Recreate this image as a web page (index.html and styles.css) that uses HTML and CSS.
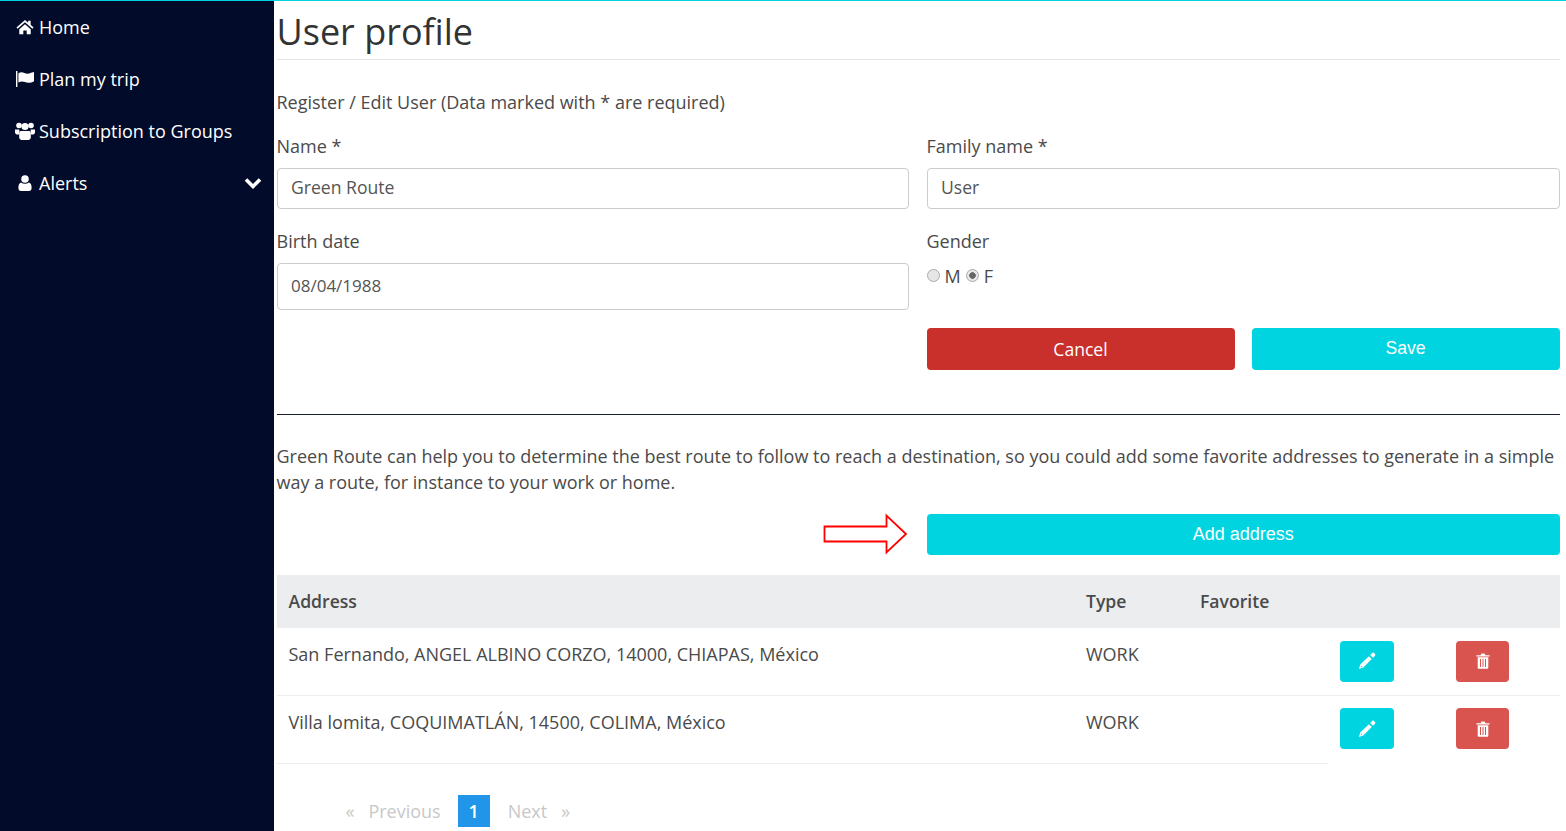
FILE: index.html
```html
<!DOCTYPE html>
<html lang="en">
<head>
    <meta charset="UTF-8">
    <title>User profile</title>
    <link rel="stylesheet" href="styles.css">
</head>
<body>
    <div class="layout">
        <nav class="sidebar">
            <a class="nav-item" href="#">
                <svg class="nav-icon" viewBox="0 0 16 14"><path d="M8 .8.4 7.4l1 1.1L8 2.8l6.6 5.7 1-1.1L13 5.1V1.4h-2.2v1.8z"/><path d="M2.9 8.9 8 4.5l5.1 4.4v4.600H9.500V10h-3v3.500H2.900z"/></svg>
                <span>Home</span>
            </a>
            <a class="nav-item" href="#">
                <svg class="nav-icon nav-icon-flag" viewBox="0 0 18 16"><path d="M0 0h1.400v16H0z"/><path d="M2.400 2.200c2.200-1.300 4.100-1.100 6-.2s4.300 1 6.600-.3L18 1v9.300c-3 1.800-6.500 1.900-9.100.8-2.200-.9-4.300-.9-6.500.5z"/></svg>
                <span>Plan my trip</span>
            </a>
            <a class="nav-item" href="#">
                <svg class="nav-icon nav-icon-wide" viewBox="0 0 20 18"><circle cx="4" cy="3.500" r="2.800"/><circle cx="16" cy="3.500" r="2.800"/><path d="M0 7.500h4.200l.8 5H1.500L0 11zM20 7.500h-4.200l-.8 5h3.500l1.500-1.500z"/><circle cx="10" cy="4.500" r="3.600"/><path d="M5.200 9h9.600l1 4.500v2.800L14 18H6l-1.800-1.700v-2.800z"/></svg>
                <span>Subscription to Groups</span>
            </a>
            <a class="nav-item" href="#">
                <svg class="nav-icon" viewBox="0 0 16 16"><circle cx="8" cy="4" r="3.800"/><path d="M4 7.600c2.400 1.600 5.600 1.600 8 0 1.800.5 2.600 2.400 2.600 5.400 0 1.900-1 3-2.600 3H4c-1.600 0-2.600-1.100-2.600-3 0-3 .8-4.900 2.600-5.400z"/></svg>
                <span>Alerts</span>
                <svg class="nav-chevron" viewBox="0 0 18 12"><path d="M2 2.500l7 7 7-7" fill="none" stroke="#fff" stroke-width="3.600"/></svg>
            </a>
        </nav>

        <main class="content">
            <h1 class="page-title">User profile</h1>
            <p class="intro">Register / Edit User (Data marked with * are required)</p>

            <form class="profile-form">
                <div class="field">
                    <label class="field-label">Name *</label>
                    <input class="text-input" type="text" value="Green Route">
                </div>
                <div class="field">
                    <label class="field-label">Family name *</label>
                    <input class="text-input" type="text" value="User">
                </div>
                <div class="field field-date">
                    <label class="field-label">Birth date</label>
                    <input class="text-input date-input" type="text" value="08/04/1988">
                </div>
                <div class="field field-date">
                    <label class="field-label">Gender</label>
                    <div class="radio-row">
                        <span class="radio"></span><span>M</span>
                        <span class="radio radio-on"></span><span>F</span>
                    </div>
                </div>
                <div></div>
                <div class="button-pair">
                    <button class="btn btn-red" type="button">Cancel</button>
                    <button class="btn btn-cyan btn-save" type="button">Save</button>
                </div>
            </form>

            <hr class="divider">

            <p class="help-text">Green Route can help you to determine the best route to follow to reach a destination, so you could add some favorite addresses to generate in a simple way a route, for instance to your work or home.</p>

            <div class="add-row">
                <svg class="arrow" viewBox="0 0 86 42"><path d="M1.500 13.500h62v-11L83 21 63.500 39.500v-11h-62z" fill="#fff" stroke="#f00" stroke-width="1.800"/></svg>
                <button class="btn btn-cyan btn-add" type="button">Add address</button>
            </div>

            <table class="address-table">
                <colgroup>
                    <col class="col-address">
                    <col class="col-type">
                    <col class="col-favorite">
                    <col class="col-edit">
                    <col class="col-delete">
                </colgroup>
                <thead>
                    <tr>
                        <th>Address</th>
                        <th>Type</th>
                        <th>Favorite</th>
                        <th></th>
                        <th></th>
                    </tr>
                </thead>
                <tbody>
                    <tr>
                        <td>San Fernando, ANGEL ALBINO CORZO, 14000, CHIAPAS, México</td>
                        <td>WORK</td>
                        <td></td>
                        <td><button class="icon-btn icon-btn-edit" type="button"><svg class="btn-icon btn-icon-pencil" viewBox="0 0 16 16"><path fill-rule="evenodd" d="M9.700 3.800l2.500 2.500-7.500 7.500-3.900 1.200 1.200-3.900zM3 12.100l-.7 1.600 1.600-.7zM10.800 2.700l1.800-1.800c.5-.5 1.100-.5 1.600 0l.9.900c.5.500.5 1.100 0 1.600l-1.800 1.800z"/></svg></button></td>
                        <td><button class="icon-btn icon-btn-delete" type="button"><svg class="btn-icon" viewBox="0 0 14 16"><path fill-rule="evenodd" d="M4.500 2.200 5.500.6h3l1 1.600H13.600v1.300H.4V2.200zM1.700 4.300h10.600v10.200c0 .8-.5 1.300-1.200 1.300H2.900c-.7 0-1.200-.5-1.200-1.300zM4 6v8h1V6zm2.500 0v8h1V6zM9 6v8h1V6z"/></svg></button></td>
                    </tr>
                    <tr>
                        <td>Villa lomita, COQUIMATLÁN, 14500, COLIMA, México</td>
                        <td>WORK</td>
                        <td></td>
                        <td><button class="icon-btn icon-btn-edit" type="button"><svg class="btn-icon btn-icon-pencil" viewBox="0 0 16 16"><path fill-rule="evenodd" d="M9.700 3.800l2.500 2.500-7.500 7.500-3.900 1.200 1.200-3.900zM3 12.100l-.7 1.600 1.600-.7zM10.800 2.700l1.800-1.800c.5-.5 1.100-.5 1.600 0l.9.900c.5.500.5 1.100 0 1.600l-1.800 1.800z"/></svg></button></td>
                        <td><button class="icon-btn icon-btn-delete" type="button"><svg class="btn-icon" viewBox="0 0 14 16"><path fill-rule="evenodd" d="M4.500 2.200 5.500.6h3l1 1.600H13.600v1.300H.4V2.200zM1.700 4.300h10.600v10.200c0 .8-.5 1.300-1.200 1.300H2.900c-.7 0-1.200-.5-1.200-1.300zM4 6v8h1V6zm2.500 0v8h1V6zM9 6v8h1V6z"/></svg></button></td>
                    </tr>
                </tbody>
            </table>

            <div class="pagination">
                <span>«</span>
                <span class="page-word page-prev">Previous</span>
                <span class="page-current">1</span>
                <span class="page-word page-next">Next</span>
                <span>»</span>
            </div>
        </main>
    </div>
</body>
</html>
```

FILE: styles.css
```css
* {
    box-sizing: border-box;
}
html, body {
    height: 100%;
    margin: 0;
    overflow: hidden;
}
body {
    font-family: "Open Sans", sans-serif;
    font-size: 18px;
    color: #4a4a4a;
    background-color: #fff;
    border-top: 1px solid #00d4e0;
}
.layout {
    display: flex;
    height: 830px;
}
.sidebar {
    width: 274px;
    flex-shrink: 0;
    background-color: #020b2a;
}
.nav-item {
    display: flex;
    align-items: center;
    height: 52px;
    padding: 0 12px 0 15px;
    color: #fff;
    text-decoration: none;
    fill: #fff;
}
.nav-icon {
    width: 20px;
    height: 16px;
    margin-right: 4px;
    padding: 0 1px;
}
.nav-icon-flag {
    padding: 0;
}
.nav-icon-wide {
    height: 18px;
    padding: 0;
}
.nav-chevron {
    width: 18px;
    height: 12px;
    margin-left: auto;
}
.content {
    flex: 1;
    padding: 0 6.500px 0 2.500px;
}
.page-title {
    margin: 0;
    height: 59px;
    padding-top: 7px;
    font-size: 36px;
    font-weight: 400;
    line-height: 48px;
    color: #333;
    border-bottom: 1px solid #e5e5e5;
}
.intro {
    margin: 29px 0 0;
    line-height: 26px;
}
.profile-form {
    display: grid;
    grid-template-columns: 1fr 1fr;
    column-gap: 18px;
    margin-top: 18px;
}
.field-label {
    display: block;
    line-height: 26px;
    margin-bottom: 9px;
}
.text-input {
    display: block;
    width: 100%;
    height: 41px;
    padding: 0 14px 3px 13.500px;
    font-family: inherit;
    font-size: 17.600px;
    color: #555;
    background-color: #fff;
    border: 1px solid #ccc;
    border-radius: 4px;
}
.field-date {
    margin-top: 19px;
}
.date-input {
    height: 47px;
    padding-bottom: 3px;
    font-size: 17px;
}
.radio-row {
    display: flex;
    align-items: center;
    gap: 5px;
    height: 22px;
    margin-top: 11px;
}
.radio {
    width: 13px;
    height: 13px;
    margin-bottom: 2px;
    border: 1px solid #aaa;
    border-radius: 50%;
    background-color: #e6e6e6;
}
.radio-on {
    background: radial-gradient(circle, #666 0 3px, #e6e6e6 3.500px);
}
.button-pair {
    display: grid;
    grid-template-columns: 308px 308px;
    column-gap: 17px;
    margin-top: 18px;
}
.btn {
    height: 42px;
    color: #fff;
    border: none;
    border-radius: 4px;
    font-size: 17.600px;
    font-family: inherit;
}
.btn-red {
    background-color: #c9302c;
}
.btn-cyan {
    background-color: #00d4e0;
}
.btn-save {
    font-family: "Liberation Sans", sans-serif;
    padding-bottom: 3px;
}
.divider {
    margin: 44px 0 0;
    border: none;
    border-top: 1px solid #1a2233;
}
.help-text {
    margin: 28px 0 0;
    line-height: 26px;
}
.add-row {
    display: flex;
    justify-content: flex-end;
    align-items: center;
    margin-top: 18px;
}
.arrow {
    width: 86px;
    height: 42px;
    margin-right: 18px;
}
.btn-add {
    width: 632.500px;
    height: 41px;
    font-family: "Liberation Sans", sans-serif;
    font-size: 18px;
}
.address-table {
    width: 100%;
    margin-top: 20px;
    table-layout: fixed;
    border-collapse: collapse;
}
.col-address {
    width: 797.500px;
}
.col-type {
    width: 114px;
}
.col-favorite {
    width: 140px;
}
.col-edit {
    width: 116px;
}
.address-table th {
    height: 53px;
    padding: 0 12px 2px;
    text-align: left;
    font-size: 17.600px;
    font-weight: 600;
    background-color: #ecedef;
}
.address-table td {
    height: 67px;
    padding: 0 12px 14px;
    border-bottom: 1px solid #eee;
}
.address-table td:nth-child(n+4) {
    padding: 0 12px;
}
.address-table tbody tr:last-child td {
    height: 68px;
}
.address-table tbody tr:last-child td:nth-child(n+4) {
    padding-bottom: 1px;
    border-bottom: none;
}
.icon-btn {
    display: flex;
    align-items: center;
    justify-content: center;
    height: 41px;
    border: none;
    border-radius: 4px;
    fill: #fff;
}
.icon-btn-edit {
    width: 54px;
    background-color: #00d4e0;
}
.icon-btn-delete {
    width: 53px;
    background-color: #d9534f;
}
.btn-icon {
    width: 16px;
    height: 16px;
}
.btn-icon-pencil {
    width: 18px;
    height: 18px;
}
.pagination {
    display: flex;
    align-items: center;
    margin: 31px 0 0 69px;
    color: #c8c8c8;
}
.page-prev {
    margin: 0 17px 0 14px;
}
.page-next {
    margin: 0 14px 0 18px;
}
.page-current {
    width: 32px;
    height: 32px;
    line-height: 32px;
    text-align: center;
    font-weight: 600;
    color: #fff;
    background-color: #2196e8;
}
```
